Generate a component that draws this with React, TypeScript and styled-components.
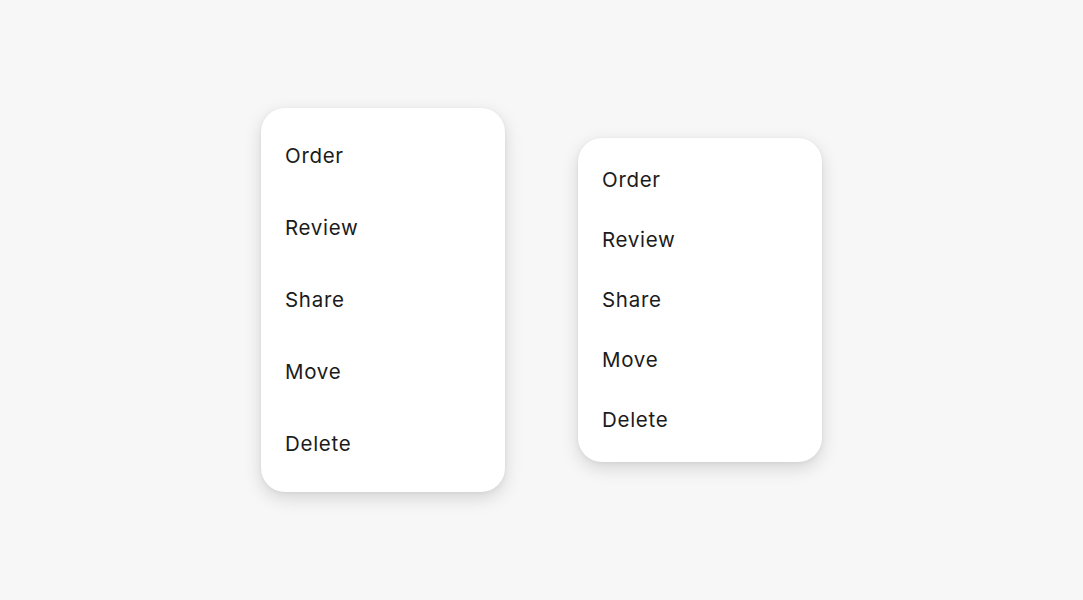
import React from "react";
import styled, { createGlobalStyle } from "styled-components";

const GlobalStyle = createGlobalStyle`
  html, body { margin: 0; padding: 0; background: #f7f7f7; }
  body { font-family: "Inter", "Liberation Sans", sans-serif; }
  *, *::before, *::after { box-sizing: border-box; }
`;

const Page = styled.div`
  height: 600px;
  display: flex;
  align-items: center;
  justify-content: center;
  gap: 73px;
  background: #f7f7f7;
`;

const Menu = styled.ul`
  list-style: none;
  margin: 0;
  padding: 12px 0;
  width: 244px;
  background: #ffffff;
  border-radius: 24px;
  box-shadow: 0 6px 18px rgba(0, 0, 0, 0.14), 0 1px 4px rgba(0, 0, 0, 0.06);
`;

const Item = styled.li<{ $h: number }>`
  height: ${(p) => p.$h}px;
  display: flex;
  align-items: center;
  padding: 0 24px 2px;
  font-size: 20.5px;
  color: #1b1b1b;
  letter-spacing: 0.7px;
`;

const items = ["Order", "Review", "Share", "Move", "Delete"];

export default function App() {
  return (
    <>
      <GlobalStyle />
      <Page>
        <Menu>
          {items.map((t) => (
            <Item key={t} $h={72}>{t}</Item>
          ))}
        </Menu>
        <Menu>
          {items.map((t) => (
            <Item key={t} $h={60}>{t}</Item>
          ))}
        </Menu>
      </Page>
    </>
  );
}
